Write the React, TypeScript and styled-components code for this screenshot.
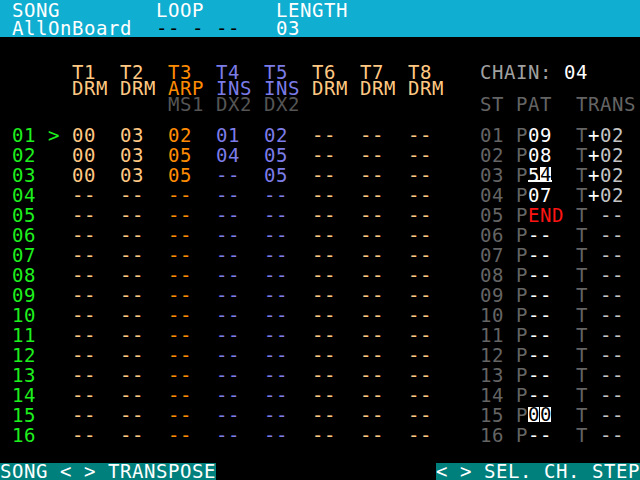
import React from "react";
import styled, { createGlobalStyle } from "styled-components";

const Global = createGlobalStyle`
  html, body { margin: 0; padding: 0; background: #000; }
  body { width: 640px; height: 480px; overflow: hidden; }
  * { box-sizing: border-box; }
`;

const C = {
  green: "#1ef01e",
  peach: "#ffc882",
  orange: "#ff8c00",
  purple: "#7c7ce8",
  dim: "#555555",
  gray: "#646464",
  light: "#a0a0a0",
  silver: "#c4c4c4",
  red: "#ff1414",
  white: "#ffffff",
  black: "#000000",
};

const Screen = styled.div`
  width: 640px;
  height: 480px;
  display: flex;
  flex-direction: column;
  background: #000;
  color: #fff;
  font-family: "DejaVu Sans Mono", "Liberation Mono", monospace;
  font-size: 19px;
  letter-spacing: 0.56px;
  white-space: pre;
`;

const TopBar = styled.div`
  height: 37px;
  background: #10aed1;
  padding: 1px 0 0 12px;
  display: grid;
  grid-template-columns: 144px 120px 1fr;
  grid-template-rows: 18px 18px;
  line-height: 18px;
  color: #fff;
`;

const Body = styled.div`
  flex: 1;
  display: flex;
  padding-top: 27px;
`;

const SongPanel = styled.div`
  padding-left: 12px;
  width: 456px;
  display: flex;
  flex-direction: column;
`;

const TrackHead = styled.div`
  display: grid;
  grid-template-columns: 60px repeat(8, 48px);
  line-height: 16px;
  height: 48px;
`;

const HeadCol = styled.div<{ $c: string }>`
  display: flex;
  flex-direction: column;
  color: ${(p) => p.$c};
`;

const Line16 = styled.span<{ $c?: string }>`
  height: 16px;
  color: ${(p) => p.$c || "inherit"};
`;

const Rows = styled.div`
  margin-top: 13px;
  display: flex;
  flex-direction: column;
`;

const SongRow = styled.div`
  display: grid;
  grid-template-columns: 36px 24px repeat(8, 48px);
  height: 20px;
  line-height: 20px;
`;

const Cell = styled.span<{ $c: string }>`
  color: ${(p) => p.$c};
`;

const ChainPanel = styled.div`
  margin-left: 24px;
  display: flex;
  flex-direction: column;
`;

const ChainTitle = styled.div`
  line-height: 16px;
  height: 16px;
  color: ${C.light};
  margin-bottom: 16px;
`;

const ChainHead = styled.div`
  display: grid;
  grid-template-columns: 36px 60px 1fr;
  line-height: 16px;
  height: 16px;
  color: ${C.gray};
`;

const ChainRow = styled.div`
  display: grid;
  grid-template-columns: 36px 60px 1fr;
  height: 20px;
  line-height: 20px;
  color: ${C.gray};
`;

const Inv = styled.span`
  display: inline-block;
  background: #fff;
  color: #000;
  height: 15px;
  line-height: 15px;
  vertical-align: 1px;
  margin-right: 1px;
  width: 11px;
  letter-spacing: 0;
`;

const Under = styled.span`
  display: inline-block;
  height: 17px;
  line-height: 20px;
  border-bottom: 2px solid #fff;
  vertical-align: top;
`;

const BottomBar = styled.div`
  height: 17px;
  display: flex;
  justify-content: space-between;
`;

const Hint = styled.span`
  background: #00807c;
  color: #fff;
  height: 17px;
  line-height: 17px;
`;

const trackColors = [C.peach, C.peach, C.orange, C.purple, C.purple, C.peach, C.peach, C.peach];
const trackTypes = ["DRM", "DRM", "ARP", "INS", "INS", "DRM", "DRM", "DRM"];
const trackSub = ["", "", "MS1", "DX2", "DX2", "", "", ""];

const songData: string[][] = [
  ["00", "03", "02", "01", "02", "--", "--", "--"],
  ["00", "03", "05", "04", "05", "--", "--", "--"],
  ["00", "03", "05", "--", "05", "--", "--", "--"],
];

const pad = (n: number) => (n < 10 ? "0" + n : String(n));

const chainPats: (string | null)[] = ["09", "08", null, "07", null];

export default function App() {
  const rows = Array.from({ length: 16 }, (_, i) => i);
  return (
    <>
      <Global />
      <Screen>
        <TopBar>
          <span>SONG</span>
          <span>LOOP</span>
          <span>LENGTH</span>
          <span>AllOnBoard</span>
          <Cell $c={C.black}>-- - --</Cell>
          <span>03</span>
        </TopBar>
        <Body>
          <SongPanel>
            <TrackHead>
              <span />
              {trackColors.map((c, t) => (
                <HeadCol key={t} $c={c}>
                  <Line16>T{t + 1}</Line16>
                  <Line16>{trackTypes[t]}</Line16>
                  <Line16 $c={C.dim}>{trackSub[t]}</Line16>
                </HeadCol>
              ))}
            </TrackHead>
            <Rows>
              {rows.map((i) => (
                <SongRow key={i}>
                  <Cell $c={C.green}>{pad(i + 1)}</Cell>
                  <Cell $c={C.green}>{i === 0 ? ">" : ""}</Cell>
                  {trackColors.map((c, t) => (
                    <Cell key={t} $c={c}>
                      {songData[i] ? songData[i][t] : "--"}
                    </Cell>
                  ))}
                </SongRow>
              ))}
            </Rows>
          </SongPanel>
          <ChainPanel>
            <ChainTitle>
              CHAIN: <Cell $c={C.white}>04</Cell>
            </ChainTitle>
            <ChainHead>
              <span>ST</span>
              <span>PAT</span>
              <span>TRANS</span>
            </ChainHead>
            <Rows>
              {rows.map((i) => {
                let pat: React.ReactNode;
                if (i === 2) {
                  pat = (
                    <Under>
                      <Cell $c={C.white}>5</Cell>
                      <Inv>4</Inv>
                    </Under>
                  );
                } else if (i === 4) {
                  pat = <Cell $c={C.red}>END</Cell>;
                } else if (i === 14) {
                  pat = (
                    <>
                      <Inv>0</Inv>
                      <Inv>0</Inv>
                    </>
                  );
                } else {
                  pat = <Cell $c={C.white}>{chainPats[i] || "--"}</Cell>;
                }
                const hasTrans = i < 4;
                return (
                  <ChainRow key={i}>
                    <span>{pad(i + 1)}</span>
                    <span>P{pat}</span>
                    <span>
                      T
                      {hasTrans ? (
                        <>
                          <Cell $c={C.white}>+</Cell>
                          <Cell $c={C.silver}>02</Cell>
                        </>
                      ) : (
                        <Cell $c={C.silver}> --</Cell>
                      )}
                    </span>
                  </ChainRow>
                );
              })}
            </Rows>
          </ChainPanel>
        </Body>
        <BottomBar>
          <Hint>SONG &lt; &gt; TRANSPOSE</Hint>
          <Hint>&lt; &gt; SEL. CH. STEP</Hint>
        </BottomBar>
      </Screen>
    </>
  );
}
